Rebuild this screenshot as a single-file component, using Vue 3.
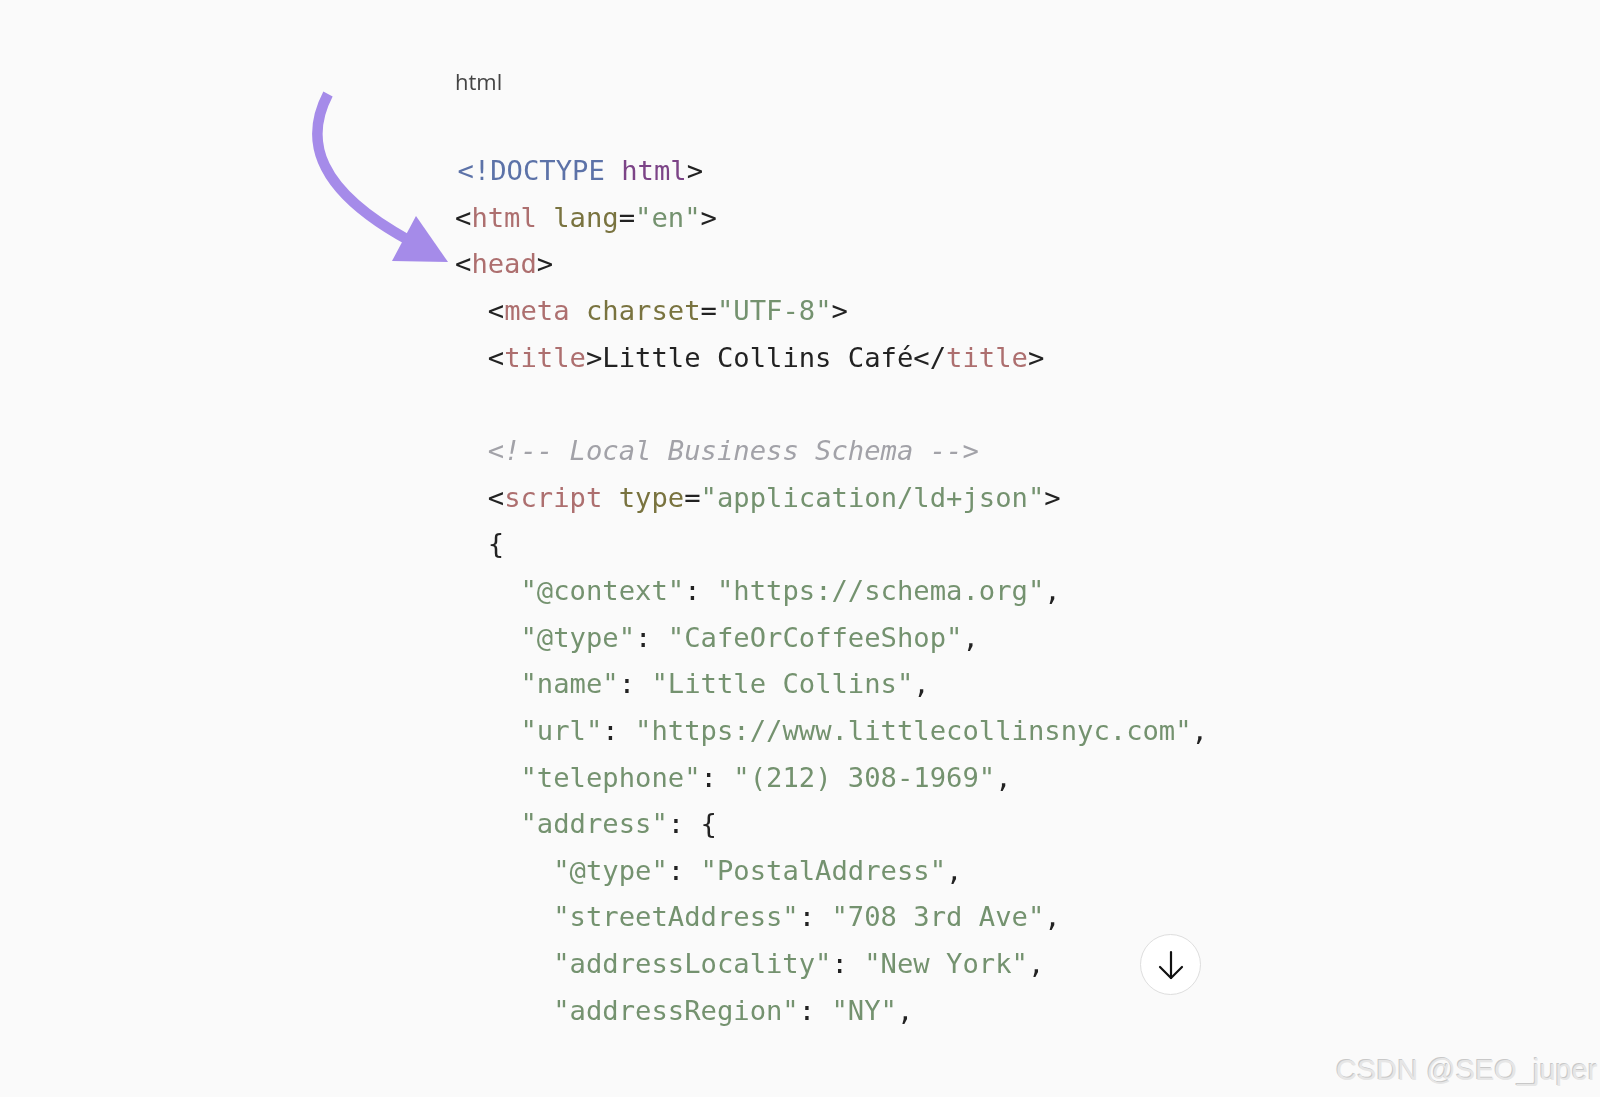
<script setup>
const t = (s) => ({ c: 'tag', s })
const a = (s) => ({ c: 'attr', s })
const v = (s) => ({ c: 'str', s })
const p = (s) => ({ c: 'plain', s })

const lines = [
  { i: 0, first: true, parts: [{ c: 'doc', s: '<!DOCTYPE ' }, { c: 'kw', s: 'html' }, p('>')] },
  { i: 0, parts: [p('<'), t('html'), p(' '), a('lang'), p('='), v('"en"'), p('>')] },
  { i: 0, parts: [p('<'), t('head'), p('>')] },
  { i: 1, parts: [p('<'), t('meta'), p(' '), a('charset'), p('='), v('"UTF-8"'), p('>')] },
  { i: 1, parts: [p('<'), t('title'), p('>Little Collins Café</'), t('title'), p('>')] },
  { i: 0, parts: [] },
  { i: 1, parts: [{ c: 'com', s: '<!-- Local Business Schema -->' }] },
  { i: 1, parts: [p('<'), t('script'), p(' '), a('type'), p('='), v('"application/ld+json"'), p('>')] },
  { i: 1, parts: [p('{')] },
  { i: 2, parts: [v('"@context"'), p(': '), v('"https://schema.org"'), p(',')] },
  { i: 2, parts: [v('"@type"'), p(': '), v('"CafeOrCoffeeShop"'), p(',')] },
  { i: 2, parts: [v('"name"'), p(': '), v('"Little Collins"'), p(',')] },
  { i: 2, parts: [v('"url"'), p(': '), v('"https://www.littlecollinsnyc.com"'), p(',')] },
  { i: 2, parts: [v('"telephone"'), p(': '), v('"(212) 308-1969"'), p(',')] },
  { i: 2, parts: [v('"address"'), p(': {')] },
  { i: 3, parts: [v('"@type"'), p(': '), v('"PostalAddress"'), p(',')] },
  { i: 3, parts: [v('"streetAddress"'), p(': '), v('"708 3rd Ave"'), p(',')] },
  { i: 3, parts: [v('"addressLocality"'), p(': '), v('"New York"'), p(',')] },
  { i: 3, parts: [v('"addressRegion"'), p(': '), v('"NY"'), p(',')] },
]
</script>

<template>
  <div class="page">
    <main class="content">
      <div class="lang">html</div>
      <pre class="code"><code><span v-for="(line, n) in lines" :key="n" class="line" :class="{ first: line.first }">{{ '  '.repeat(line.i) }}<span v-for="(part, m) in line.parts" :key="m" :class="part.c">{{ part.s }}</span></span></code></pre>
    </main>

    <svg class="arrow" width="140" height="190" viewBox="0 0 140 190" aria-hidden="true">
      <path d="M20 4 C -4 50, 8 100, 102 151" fill="none" stroke="#a58be9" stroke-width="10.5" />
      <path d="M108 126 L140 172 L84 171 Z" fill="#a58be9" />
    </svg>

    <button class="down" type="button" aria-label="Scroll down">
      <svg width="28" height="30" viewBox="0 0 28 30" fill="none" stroke="#111" stroke-width="2.2" stroke-linecap="round" stroke-linejoin="round">
        <path d="M14 2 V28" />
        <path d="M3 17 L14 28 L25 17" />
      </svg>
    </button>

    <div class="mark">CSDN @SEO_juper</div>
  </div>
</template>

<style>
html, body { margin: 0; background: #fafafa; }
</style>

<style scoped>
.page {
  position: relative;
  width: 1600px;
  height: 1097px;
  overflow: hidden;
  background: #fafafa;
}
.content {
  padding: 67px 0 0 455px;
  filter: blur(0.4px);
}
.lang {
  font-family: "Open Sans", sans-serif;
  font-size: 22px;
  line-height: 28px;
  color: #444;
}
.code {
  margin: 53px 0 0;
  font-family: "DejaVu Sans Mono", monospace;
  font-size: 27.2px;
  line-height: 46.65px;
  color: #222;
}
.code code {
  font-family: inherit;
}
.line {
  display: block;
  min-height: 46.65px;
}
.first {
  padding-left: 2.5px;
}
.plain { color: #222; }
.tag { color: #ad6f6f; }
.attr { color: #79733f; }
.str { color: #74926f; }
.doc { color: #5c72a8; }
.kw { color: #7c4487; }
.com { color: #a2a2a8; font-style: italic; }
.arrow {
  position: absolute;
  left: 308px;
  top: 90px;
}
.down {
  position: absolute;
  left: 1140px;
  top: 934px;
  width: 61px;
  height: 61px;
  padding: 0;
  display: flex;
  align-items: center;
  justify-content: center;
  border: 1px solid #dedede;
  border-radius: 50%;
  background: #fff;
}
.mark {
  position: absolute;
  left: 1336px;
  top: 1052px;
  font-family: "Liberation Sans", sans-serif;
  font-size: 29px;
  line-height: 36px;
  color: #e6e6e6;
  text-shadow: -1px -1px 0 #c8c8c8;
  white-space: nowrap;
}
</style>
